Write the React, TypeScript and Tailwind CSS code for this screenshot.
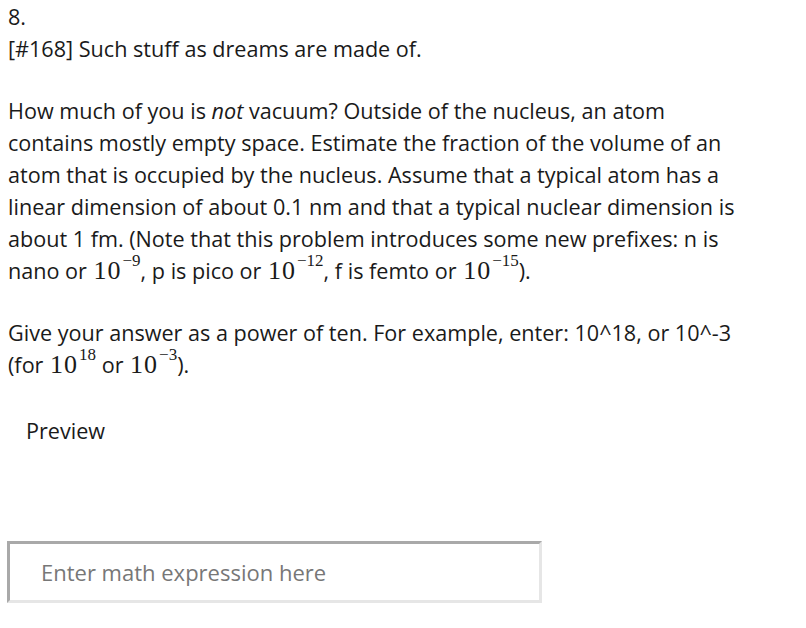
import React from 'react'

/**
 * Power-of-ten expression in a serif math face
 */
const Pow: React.FC<{ exp: string }> = ({ exp }) => (
  <span className="ml-[1px] font-['Liberation_Serif',serif] text-[26px] leading-none tracking-[1px]">
    10<sup className="relative top-[-13px] ml-[1px] align-baseline text-[17px] leading-none tracking-normal">{exp}</sup>
  </span>
)

export default function App() {
  return (
    <div className="min-h-[628px] w-[806px] bg-white px-2 pt-[1px] font-['Open_Sans',sans-serif] text-[21.6px] leading-[32px] text-[#1a1a1a]">
      <div>8.</div>
      <div>[#168] Such stuff as dreams are made of.</div>

      <p className="mt-[30px] w-[736px]">
        How much of you is <em>not</em> vacuum? Outside of the nucleus, an atom contains mostly empty
        space. Estimate the fraction of the volume of an atom that is occupied by the nucleus. Assume
        that a typical atom has a linear dimension of about 0.1 nm and that a typical nuclear dimension
        is about 1 fm. (Note that this problem introduces some new prefixes: n is nano or{' '}
        <Pow exp="−9" />, p is pico or <Pow exp="−12" />, f is femto or <Pow exp="−15" />).
      </p>

      <p className="mt-[30px] w-[736px]">
        Give your answer as a power of ten. For example, enter: 10^18, or 10^-3 (for{' '}
        <Pow exp="18" /> or <Pow exp="−3" />).
      </p>

      <div className="mt-[34px] pl-[18px]">Preview</div>

      {/* Answer input */}
      <div className="mt-[94px]">
        <input
          type="text"
          placeholder="Enter math expression here"
          className="h-[62px] w-[535px] -ml-[1px] border-[3px] border-t-[#a9a9a9] border-l-[#a9a9a9] border-b-[#e6e6e6] border-r-[#e6e6e6] bg-white px-[31px] text-[22px] text-[#1a1a1a] outline-none placeholder:text-[#777]"
        />
      </div>
    </div>
  )
}
